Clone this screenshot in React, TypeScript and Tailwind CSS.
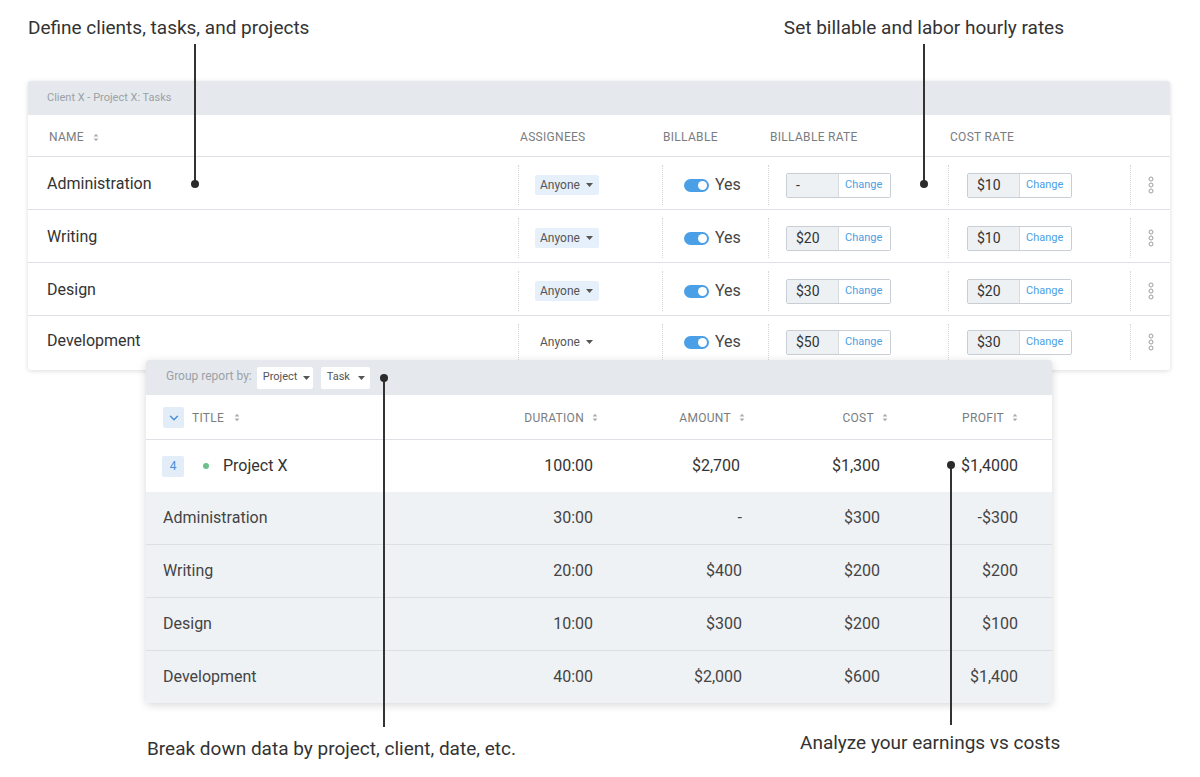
import { ChevronDown } from "lucide-react";

const tasks = [
  { name: "Administration", tag: true, rate: "-", cost: "$10" },
  { name: "Writing", tag: true, rate: "$20", cost: "$10" },
  { name: "Design", tag: true, rate: "$30", cost: "$20" },
  { name: "Development", tag: false, rate: "$50", cost: "$30" },
];

const report = [
  { name: "Administration", duration: "30:00", amount: "-", cost: "$300", profit: "-$300" },
  { name: "Writing", duration: "20:00", amount: "$400", cost: "$200", profit: "$200" },
  { name: "Design", duration: "10:00", amount: "$300", cost: "$200", profit: "$100" },
  { name: "Development", duration: "40:00", amount: "$2,000", cost: "$600", profit: "$1,400" },
];

function Sort() {
  return (
    <svg width="6" height="9" viewBox="0 0 6 9" className="shrink-0">
      <path d="M3 0.8L5.4 3.6H0.6Z M3 8.2L0.6 5.4H5.4Z" fill="#a9adb2" />
    </svg>
  );
}

function Caret({ color = "#555" }: { color?: string }) {
  return (
    <svg width="7" height="4" viewBox="0 0 7 4" className="shrink-0">
      <path d="M0 0H7L3.5 4Z" fill={color} />
    </svg>
  );
}

function Kebab() {
  return (
    <svg width="6" height="18" viewBox="0 0 6 18">
      <circle cx="3" cy="3" r="2" fill="none" stroke="#9a9ea3" strokeWidth="1" />
      <circle cx="3" cy="9" r="2" fill="none" stroke="#9a9ea3" strokeWidth="1" />
      <circle cx="3" cy="15" r="2" fill="none" stroke="#9a9ea3" strokeWidth="1" />
    </svg>
  );
}

function RateInput({ value }: { value: string }) {
  return (
    <div className="flex h-[25px] w-[105px] rounded-[2px] border border-[#c8ced4] overflow-hidden">
      <div className="w-[51px] bg-[#eef1f4] flex items-center pl-[9px] text-[14px] text-[#333]">{value}</div>
      <div className="flex-1 border-l border-[#d6dbe0] bg-white flex items-center pl-[6px] text-[11px] text-[#4a9fe6]">
        Change
      </div>
    </div>
  );
}

function Leader({ x, top, bottom, dotY }: { x: number; top: number; bottom: number; dotY: number }) {
  return (
    <>
      <div
        className="absolute w-[1.5px] bg-[#333] z-20"
        style={{ left: x - 0.75, top, height: bottom - top }}
      />
      <div
        className="absolute w-[8px] h-[8px] rounded-full bg-[#2b2b2b] z-20"
        style={{ left: x - 4, top: dotY - 4 }}
      />
    </>
  );
}

export default function App() {
  return (
    <div className="relative w-[1200px] h-[777px] bg-white overflow-hidden font-['Roboto',sans-serif] text-[#333]">
      {/* top annotations */}
      <div className="h-[56px] flex items-center justify-between pl-[28px] pr-[136px] text-[19px] text-[#333]">
        <span>Define clients, tasks, and projects</span>
        <span>Set billable and labor hourly rates</span>
      </div>

      {/* Tasks card */}
      <div className="mt-[25px] ml-[28px] w-[1142px] pb-[6px] bg-white rounded-[3px] shadow-[0_1px_5px_rgba(0,0,0,0.14)] overflow-hidden">
        <div className="h-[34px] bg-[#e5e9ed] flex items-center pl-[19px] pt-[1px] text-[11px] text-[#9ba1a7]">
          Client X - Project X: Tasks
        </div>
        <div className="grid grid-cols-[490px_144px_106px_180px_182px_40px] h-[42px] pt-[3px] border-b border-[#dde1e5] items-center text-[12px] tracking-[0.3px] text-[#7a7d80]">
          <div className="pl-[21px] flex items-center gap-[9px]">
            NAME <Sort />
          </div>
          <div className="pl-[2px]">ASSIGNEES</div>
          <div className="pl-[1px]">BILLABLE</div>
          <div className="pl-[2px]">BILLABLE RATE</div>
          <div className="pl-[2px]">COST RATE</div>
          <div />
        </div>
        {tasks.map((t, i) => (
          <div
            key={t.name}
            className={`grid grid-cols-[490px_144px_106px_180px_182px_40px] ${
              i < tasks.length - 1 ? "h-[53px] border-b border-[#dde1e5]" : "h-[48px]"
            }`}
          >
            <div className="pl-[19px] pt-[2px] flex items-center text-[16px] text-[#333]">{t.name}</div>
            <div className="mt-[8px] mb-[4px] border-l border-dotted border-[#d3d7db] flex items-center pl-[16px]">
              <div
                className={`h-[20px] w-[64px] rounded-[2px] flex items-center gap-[6px] pl-[5px] text-[12px] text-[#555] ${
                  t.tag ? "bg-[#e6f0fa]" : ""
                }`}
              >
                Anyone <Caret />
              </div>
            </div>
            <div className="mt-[8px] mb-[4px] border-l border-dotted border-[#d3d7db] flex items-center pl-[21px] gap-[6px]">
              <div className="w-[25px] h-[13px] rounded-full bg-[#4a9fe6] flex items-center justify-end pr-[2px]">
                <div className="w-[9px] h-[9px] rounded-full bg-white" />
              </div>
              <span className="text-[16px] text-[#444] -mt-[1px]">Yes</span>
            </div>
            <div className="mt-[8px] mb-[4px] border-l border-dotted border-[#d3d7db] flex items-center pl-[17px]">
              <RateInput value={t.rate} />
            </div>
            <div className="mt-[8px] mb-[4px] border-l border-dotted border-[#d3d7db] flex items-center pl-[18px]">
              <RateInput value={t.cost} />
            </div>
            <div className="mt-[8px] mb-[4px] border-l border-dotted border-[#d3d7db] flex items-center justify-center">
              <Kebab />
            </div>
          </div>
        ))}
      </div>

      {/* Report card */}
      <div className="relative z-10 -mt-[10px] ml-[146px] w-[906px] bg-white rounded-[3px] shadow-[0_2px_8px_rgba(0,0,0,0.16)] overflow-hidden">
        <div className="h-[35px] bg-[#e5e9ed] flex items-center pl-[20px]">
          <span className="text-[12px] text-[#9ba1a7] -mt-[3px]">Group report by:</span>
          <div className="h-[22px] w-[56px] ml-[5px] pl-[6px] bg-white rounded-[2px] flex items-center gap-[6px] text-[11px] text-[#555]">
            Project <Caret />
          </div>
          <div className="h-[22px] w-[49px] ml-[8px] pl-[6px] bg-white rounded-[2px] flex items-center gap-[8px] text-[11px] text-[#555]">
            Task <Caret />
          </div>
        </div>
        <div className="grid grid-cols-[314px_140px_146px_142px_132px_32px] h-[45px] pt-[1px] border-b border-[#dde1e5] items-center text-[12px] tracking-[0.3px] text-[#7a7d80]">
          <div className="pl-[17px] flex items-center">
            <div className="w-[21px] h-[21px] rounded-[2px] bg-[#e2edf8] grid place-items-center">
              <ChevronDown size={14} strokeWidth={2.5} color="#4a90d9" />
            </div>
            <span className="ml-[8px]">TITLE</span>
            <span className="ml-[10px] flex">
              <Sort />
            </span>
          </div>
          <div className="flex items-center justify-end gap-[8px] pr-[2px]">
            DURATION <Sort />
          </div>
          <div className="flex items-center justify-end gap-[8px] pr-[1px]">
            AMOUNT <Sort />
          </div>
          <div className="flex items-center justify-end gap-[8px]">
            COST <Sort />
          </div>
          <div className="flex items-center justify-end gap-[8px] pr-[2px]">
            PROFIT <Sort />
          </div>
          <div />
        </div>
        <div className="grid grid-cols-[314px_140px_146px_142px_132px_32px] h-[52px] items-center text-[16px] text-[#333]">
          <div className="pl-[16px] flex items-center">
            <div className="w-[22px] h-[21px] rounded-[2px] bg-[#e2edf8] grid place-items-center text-[12px] text-[#4a90d9]">
              4
            </div>
            <div className="ml-[19px] w-[6px] h-[6px] rounded-full bg-[#6cc08b]" />
            <span className="ml-[14px] text-[16px]">Project X</span>
          </div>
          <div className="text-right pr-[7px]">100:00</div>
          <div className="text-right pr-[6px]">$2,700</div>
          <div className="text-right pr-[8px]">$1,300</div>
          <div className="text-right pr-[2px]">$1,4000</div>
          <div />
        </div>
        {report.map((r, i) => (
          <div
            key={r.name}
            className={`grid grid-cols-[314px_140px_146px_142px_132px_32px] items-center bg-[#eff2f5] text-[16px] text-[#444] ${
              i < report.length - 1 ? "h-[53px] border-b border-[#dce0e4]" : "h-[52px]"
            }`}
          >
            <div className="pl-[17px]">{r.name}</div>
            <div className="text-right pr-[7px]">{r.duration}</div>
            <div className="text-right pr-[4px]">{r.amount}</div>
            <div className="text-right pr-[8px]">{r.cost}</div>
            <div className="text-right pr-[2px]">{r.profit}</div>
            <div />
          </div>
        ))}
      </div>

      {/* bottom annotations */}
      <div className="flex items-start pl-[147px] text-[19px] text-[#333]">
        <span className="w-[653px] mt-[32px]">Break down data by project, client, date, etc.</span>
        <span className="mt-[26px]">Analyze your earnings vs costs</span>
      </div>

      <Leader x={195} top={44} bottom={184} dotY={184} />
      <Leader x={924} top={44} bottom={184} dotY={184} />
      <Leader x={384} top={378} bottom={727} dotY={378} />
      <Leader x={951} top={465} bottom={725} dotY={465} />
    </div>
  );
}
